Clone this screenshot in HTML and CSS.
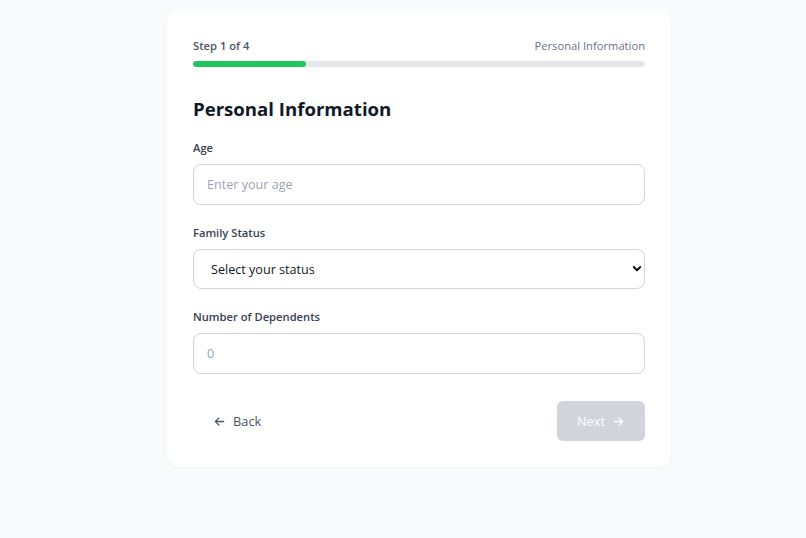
FILE: index.html
```html
<!DOCTYPE html>
<html lang="en">
<head>
<meta charset="utf-8">
<title>Personal Information</title>
<link rel="stylesheet" href="styles.css">
</head>
<body>
<main class="page">
  <section class="card">
    <div class="progress-head">
      <span class="step">Step 1 of 4</span>
      <span class="step-name">Personal Information</span>
    </div>
    <div class="track"><div class="fill" style="width:25%"></div></div>

    <h1 class="title">Personal Information</h1>

    <div class="field">
      <label class="label" for="age">Age</label>
      <input class="input" id="age" type="text" placeholder="Enter your age">
    </div>

    <div class="field">
      <label class="label" for="status">Family Status</label>
      <div class="select-wrap">
        <select class="input select" id="status">
          <option>Select your status</option>
        </select>
        <svg class="chev" width="10" height="8" viewBox="0 0 10 8"><path d="M1.8 2 L5 5.2 L8.2 2" fill="none" stroke="#111" stroke-width="2" stroke-linecap="round" stroke-linejoin="round"/></svg>
      </div>
    </div>

    <div class="field">
      <label class="label" for="deps">Number of Dependents</label>
      <input class="input" id="deps" type="text" placeholder="0">
    </div>

    <div class="actions">
      <button class="btn back" type="button">
        <svg width="11" height="11" viewBox="0 0 12 12"><path d="M10.5 6 H1.5 M5.5 2 L1.5 6 L5.5 10" fill="none" stroke="#4b5563" stroke-width="1.4" stroke-linecap="round" stroke-linejoin="round"/></svg>
        <span>Back</span>
      </button>
      <button class="btn next" type="button">
        <span>Next</span>
        <svg width="11" height="11" viewBox="0 0 12 12"><path d="M1.5 6 H10.5 M6.5 2 L10.5 6 L6.5 10" fill="none" stroke="#ffffff" stroke-width="1.4" stroke-linecap="round" stroke-linejoin="round"/></svg>
      </button>
    </div>
  </section>
</main>
</body>
</html>
```

FILE: styles.css
```css
* { box-sizing: border-box; }
html, body {
  margin: 0;
  padding: 0;
  background: #f9fafb;
  font-family: "Open Sans", "Noto Sans", "Liberation Sans", sans-serif;
  color: #111827;
}
.page {
  display: flex;
  justify-content: center;
  align-items: flex-start;
  padding: 11px 0 0 32px;
  min-height: 538px;
}
.card {
  width: 504px;
  background: #ffffff;
  border-radius: 12px;
  box-shadow: 0 1px 3px rgba(0,0,0,0.04);
  padding: 26px 26px 26px;
}
.progress-head {
  display: flex;
  justify-content: space-between;
  align-items: center;
  height: 16px;
  font-size: 11.2px;
}
.step { color: #4b5563; font-weight: 600; }
.step-name { color: #6b7280; }
.track {
  margin-top: 8px;
  height: 6px;
  border-radius: 3px;
  background: #e5e7eb;
  overflow: hidden;
}
.fill {
  height: 100%;
  background: #22c55e;
  border-radius: 3px;
}
.title {
  margin: 28px 0 17px;
  font-size: 18.6px;
  line-height: 28px;
  font-weight: 700;
  color: #111827;
}
.field { margin-bottom: 20px; }
.field:last-of-type { margin-bottom: 0; }
.label {
  display: block;
  font-size: 11.2px;
  line-height: 16px;
  font-weight: 600;
  color: #374151;
  margin-bottom: 8px;
}
.input {
  display: block;
  width: 100%;
  height: 41px;
  border: 1px solid #d1d5db;
  border-radius: 8px;
  padding: 0 13px;
  font-family: inherit;
  font-size: 12.6px;
  color: #111827;
  background: #ffffff;
  outline: none;
}
.input::placeholder { color: #9ca3af; }
.select-wrap { position: relative; }
.select {
  appearance: none;
  -webkit-appearance: none;
  height: 40px;
  padding-left: 17px;
  color: #111827;
}
.chev {
  position: absolute;
  right: 3px;
  top: 16px;
}
.actions {
  margin-top: 27px;
  display: flex;
  justify-content: space-between;
  align-items: center;
}
.btn {
  display: flex;
  align-items: center;
  gap: 8px;
  height: 40px;
  border: none;
  border-radius: 6px;
  font-family: inherit;
  font-size: 12.8px;
  cursor: pointer;
}
.back {
  background: transparent;
  color: #4b5563;
  padding: 0 20px 0 21px;
}
.next {
  background: #d1d5db;
  color: #ffffff;
  padding: 0 21px 0 20px;
}
```
